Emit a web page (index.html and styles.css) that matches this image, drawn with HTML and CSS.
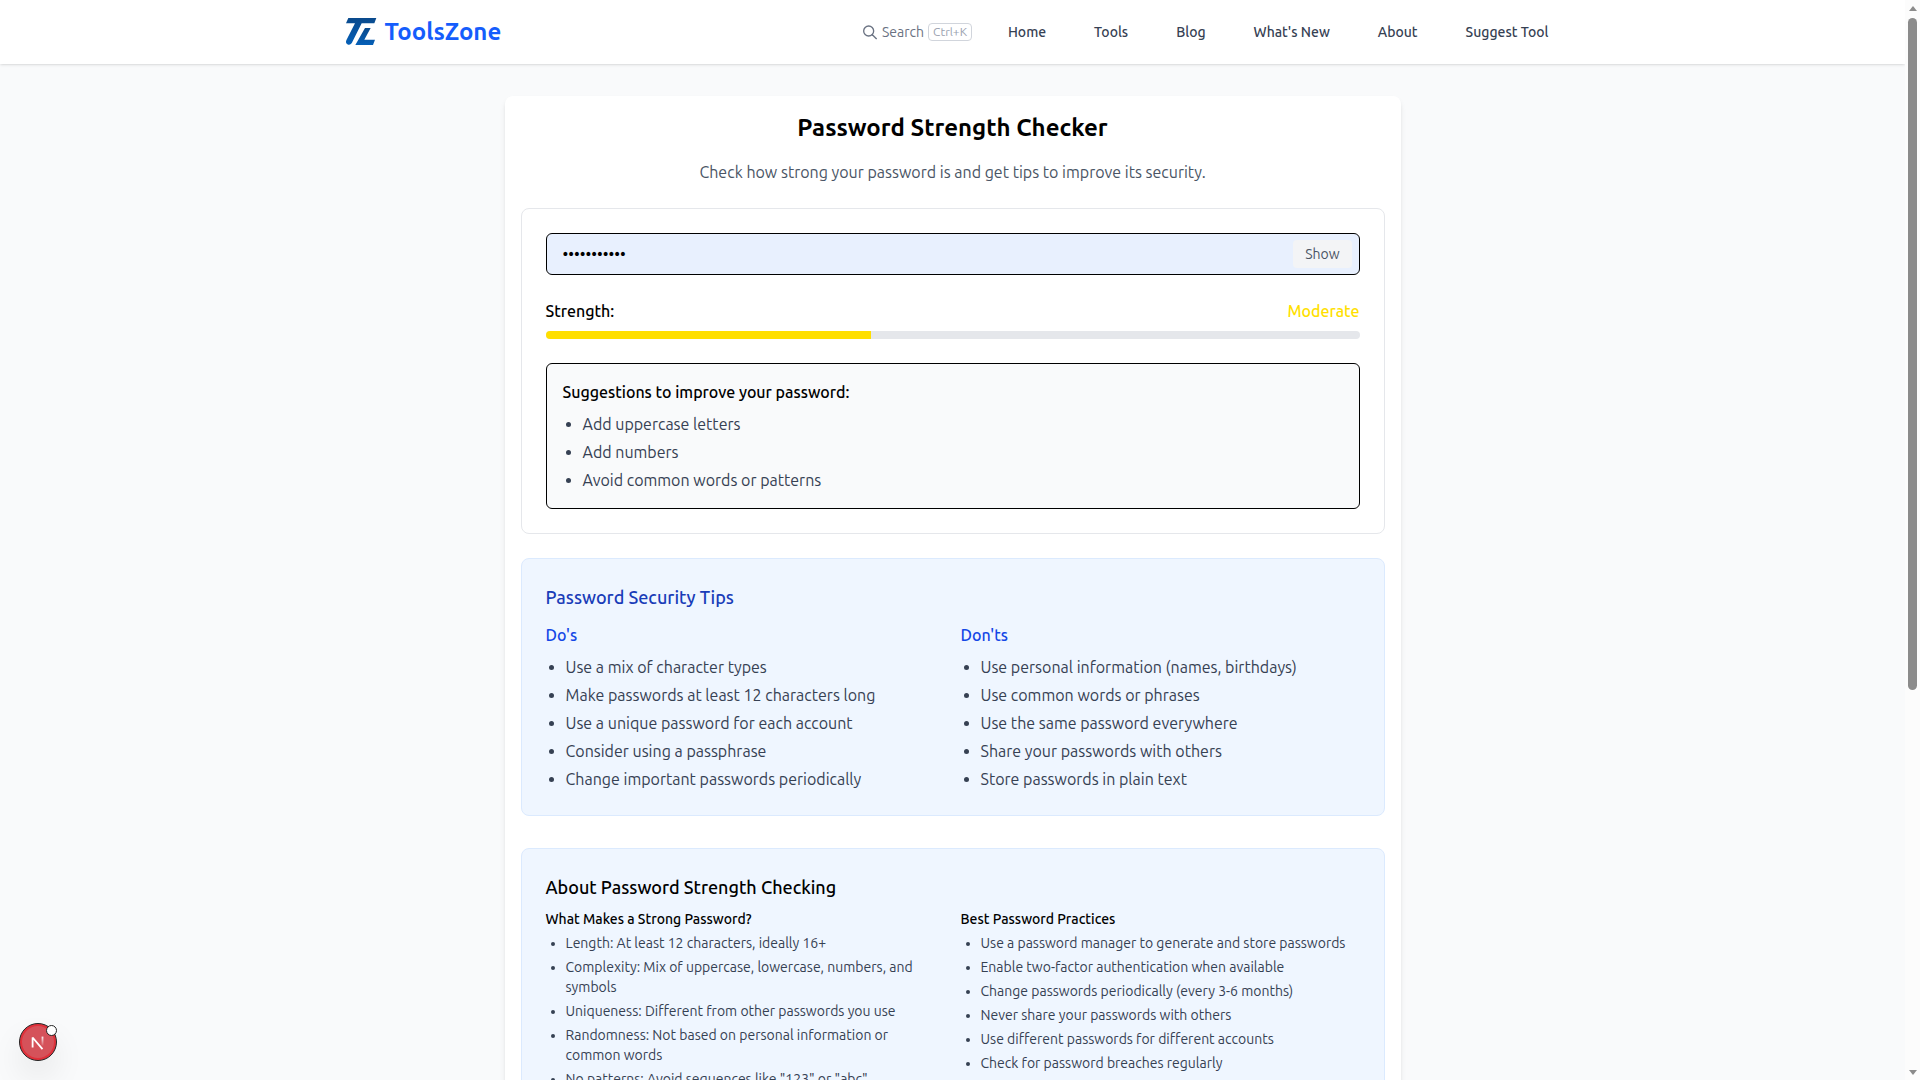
FILE: index.html
```html
<!DOCTYPE html>
<html lang="en">

<head>
    <meta charset="UTF-8">
    <meta name="viewport" content="width=device-width, initial-scale=1.0">
    <title>Password Strength Checker - ToolsZone</title>
    <link rel="stylesheet" href="styles.css">
</head>

<body>
    <header class="site-header">
        <div class="header-inner">
            <a href="#" class="brand">
                <svg class="brand-logo" viewBox="0 0 96 96" aria-hidden="true">
                    <defs>
                        <linearGradient id="logo-fill" x1="0" y1="0" x2="0" y2="1">
                            <stop offset="0" stop-color="#0a4a8c" />
                            <stop offset="1" stop-color="#0560b8" />
                        </linearGradient>
                    </defs>
                    <path fill="url(#logo-fill)" d="M10 6H94L88 22H50L23 76Q19 87 10 86Q0 83 4 73L30 22H3Z" />
                    <path fill="url(#logo-fill)" d="M60 36H77L58 71H90L84 87H31Z" />
                </svg>
                <span class="brand-name">ToolsZone</span>
            </a>
            <nav class="main-nav">
                <button type="button" class="search-btn">
                    <svg class="search-icon" viewBox="0 0 24 24" fill="none" stroke="currentColor" stroke-width="2" stroke-linecap="round" stroke-linejoin="round" aria-hidden="true">
                        <circle cx="10" cy="10.5" r="7.5" />
                        <path d="M15.5 16l6 6" />
                    </svg>
                    <span>Search</span>
                    <kbd>Ctrl+K</kbd>
                </button>
                <a href="#">Home</a>
                <a href="#">Tools</a>
                <a href="#">Blog</a>
                <a href="#">What's New</a>
                <a href="#">About</a>
                <a href="#">Suggest Tool</a>
            </nav>
        </div>
    </header>

    <main class="card">
        <h1>Password Strength Checker</h1>
        <p class="subtitle">Check how strong your password is and get tips to improve its security.</p>

        <section class="panel checker">
            <div class="password-field">
                <input type="password" id="password-input" aria-label="Password" value="sunshine-tr">
                <button type="button" id="toggle-btn">Show</button>
            </div>

            <div class="strength">
                <div class="strength-row">
                    <span>Strength:</span>
                    <span class="strength-label">Moderate</span>
                </div>
                <div class="strength-bar">
                    <div class="strength-fill" style="width: 40%"></div>
                </div>
            </div>

            <div class="suggestions">
                <h3>Suggestions to improve your password:</h3>
                <ul>
                    <li>Add uppercase letters</li>
                    <li>Add numbers</li>
                    <li>Avoid common words or patterns</li>
                </ul>
            </div>
        </section>

        <section class="panel tips">
            <h2>Password Security Tips</h2>
            <div class="columns">
                <div>
                    <h3>Do's</h3>
                    <ul>
                        <li>Use a mix of character types</li>
                        <li>Make passwords at least 12 characters long</li>
                        <li>Use a unique password for each account</li>
                        <li>Consider using a passphrase</li>
                        <li>Change important passwords periodically</li>
                    </ul>
                </div>
                <div>
                    <h3>Don'ts</h3>
                    <ul>
                        <li>Use personal information (names, birthdays)</li>
                        <li>Use common words or phrases</li>
                        <li>Use the same password everywhere</li>
                        <li>Share your passwords with others</li>
                        <li>Store passwords in plain text</li>
                    </ul>
                </div>
            </div>
        </section>

        <section class="panel about">
            <h2>About Password Strength Checking</h2>
            <div class="columns">
                <div>
                    <h3>What Makes a Strong Password?</h3>
                    <ul>
                        <li>Length: At least 12 characters, ideally 16+</li>
                        <li>Complexity: Mix of uppercase, lowercase, numbers, and symbols</li>
                        <li>Uniqueness: Different from other passwords you use</li>
                        <li>Randomness: Not based on personal information or common words</li>
                        <li>No patterns: Avoid sequences like "123" or "abc"</li>
                    </ul>
                </div>
                <div>
                    <h3>Best Password Practices</h3>
                    <ul>
                        <li>Use a password manager to generate and store passwords</li>
                        <li>Enable two-factor authentication when available</li>
                        <li>Change passwords periodically (every 3-6 months)</li>
                        <li>Never share your passwords with others</li>
                        <li>Use different passwords for different accounts</li>
                        <li>Check for password breaches regularly</li>
                    </ul>
                </div>
            </div>
        </section>
    </main>

    <button type="button" class="dev-badge" aria-label="Open dev tools">
        <svg viewBox="0 0 40 40" fill="none" aria-hidden="true">
            <defs>
                <linearGradient id="n-fade" x1="0" y1="13" x2="0" y2="25" gradientUnits="userSpaceOnUse">
                    <stop offset="0" stop-color="#fff" />
                    <stop offset="1" stop-color="#fff" stop-opacity="0" />
                </linearGradient>
            </defs>
            <path d="M14 26V15L25 28" stroke="#fff" stroke-width="2" stroke-linejoin="bevel" />
            <path d="M25 14V24" stroke="url(#n-fade)" stroke-width="2" />
        </svg>
        <span class="dev-dot"></span>
    </button>

    <div class="scrollbar" aria-hidden="true">
        <span class="arrow-up"></span>
        <div class="track">
            <div class="thumb"></div>
        </div>
        <span class="arrow-down"></span>
    </div>

    <script>
        var input = document.getElementById('password-input');
        var toggle = document.getElementById('toggle-btn');

        toggle.addEventListener('click', function () {
            var hidden = input.type === 'password';
            input.type = hidden ? 'text' : 'password';
            toggle.textContent = hidden ? 'Hide' : 'Show';
        });
    </script>
</body>

</html>
```
FILE: styles.css
```css
* {
    box-sizing: border-box;
}

body {
    margin: 0;
    padding-right: 15px;
    height: 100vh;
    overflow: hidden;
    font-family: Ubuntu, Roboto, sans-serif;
    font-size: 16px;
    line-height: 24px;
    color: #000;
    background-color: #f9fafb;
}

h1,
h2,
h3,
p,
ul {
    margin: 0;
    padding: 0;
}

h2,
h3 {
    font-weight: 500;
}

button,
input {
    font-family: inherit;
}

button {
    cursor: pointer;
}

/* Header */

.site-header {
    background-color: #fff;
    box-shadow: 0 1px 3px rgba(0, 0, 0, 0.1), 0 1px 2px -1px rgba(0, 0, 0, 0.1);
}

.header-inner {
    display: flex;
    align-items: center;
    justify-content: space-between;
    max-width: 1280px;
    height: 64px;
    margin: 0 auto;
    padding: 0 32px;
}

.brand {
    display: flex;
    align-items: center;
    gap: 8px;
    color: #155dfc;
    text-decoration: none;
}

.brand-logo {
    width: 32px;
    height: 32px;
}

.brand-name {
    font-size: 24px;
    font-weight: 700;
    line-height: 32px;
}

.main-nav {
    display: flex;
    align-items: center;
    gap: 24px;
}

.main-nav a {
    padding: 8px 12px;
    font-size: 14px;
    font-weight: 500;
    line-height: 20px;
    color: #364153;
    text-decoration: none;
}

.search-btn {
    display: flex;
    align-items: center;
    gap: 4px;
    padding: 0;
    border: none;
    background: none;
    font-size: 14px;
    line-height: 20px;
    color: #6a7282;
}

.search-icon {
    width: 16px;
    height: 16px;
}

.search-btn kbd {
    padding: 0 4px;
    border: 1px solid #d1d5dc;
    border-radius: 4px;
    font-family: inherit;
    font-size: 12px;
    line-height: 16px;
    color: #99a1af;
}

/* Main card */

.card {
    max-width: 896px;
    margin: 32px auto;
    padding: 16px;
    background-color: #fff;
    border-radius: 8px;
    box-shadow: 0 4px 6px -1px rgba(0, 0, 0, 0.1), 0 2px 4px -2px rgba(0, 0, 0, 0.1);
}

h1 {
    margin-bottom: 16px;
    font-size: 24px;
    font-weight: 600;
    line-height: 32px;
    text-align: center;
}

.subtitle {
    margin-bottom: 24px;
    color: #4a5565;
    text-align: center;
}

.panel {
    padding: 24px;
    border: 1px solid #e5e7eb;
    border-radius: 8px;
}

ul {
    padding-left: 20px;
    color: #364153;
}

li + li {
    margin-top: 4px;
}

.columns {
    display: grid;
    grid-template-columns: 1fr 1fr;
    gap: 16px;
}

/* Checker */

.checker {
    display: flex;
    flex-direction: column;
    gap: 24px;
}

.password-field {
    position: relative;
}

#password-input {
    display: block;
    width: 100%;
    height: 42px;
    padding: 8px 16px;
    border: 1px solid #000;
    border-radius: 6px;
    background-color: #e8f0fe;
    font-size: 16px;
    color: #000;
}

#toggle-btn {
    position: absolute;
    top: 7px;
    right: 8px;
    padding: 4px 12px;
    border: none;
    border-radius: 4px;
    background-color: #f3f4f6;
    font-size: 14px;
    line-height: 20px;
    color: #4a5565;
}

.strength-row {
    display: flex;
    justify-content: space-between;
    margin-bottom: 8px;
    font-weight: 500;
}

.strength-label {
    color: #ffdf00;
}

.strength-bar {
    height: 8px;
    border-radius: 4px;
    background-color: #e5e7eb;
    overflow: hidden;
}

.strength-fill {
    height: 100%;
    background-color: #ffdf00;
}

.suggestions {
    padding: 16px;
    border: 1px solid #000;
    border-radius: 6px;
    background-color: #f9fafb;
}

.suggestions h3 {
    margin-bottom: 8px;
    font-size: 16px;
}

/* Tips and about */

.tips,
.about {
    border-color: #dbeafe;
    background-color: #eff6ff;
}

.tips {
    margin-top: 24px;
}

.tips h2,
.about h2 {
    font-size: 18px;
    line-height: 28px;
}

.tips h2 {
    margin-bottom: 12px;
    color: #193cb8;
}

.tips h3 {
    margin-bottom: 8px;
    font-size: 16px;
    color: #1447e6;
}

.about {
    margin-top: 32px;
    font-size: 14px;
    line-height: 20px;
}

.about h2 {
    margin-bottom: 8px;
}

.about h3 {
    margin-bottom: 4px;
    font-size: 14px;
}

/* Floating badge */

.dev-badge {
    position: fixed;
    left: 19px;
    bottom: 19px;
    width: 38px;
    height: 38px;
    padding: 0;
    border: 1px solid #222;
    border-radius: 50%;
    background-color: #d5525a;
    box-shadow: inset 0 0 0 2px #e0303a, 0 16px 32px rgba(0, 0, 0, 0.08);
}

.dev-badge svg {
    display: block;
    width: 100%;
    height: 100%;
}

.dev-dot {
    position: absolute;
    top: 1px;
    right: -1px;
    width: 11px;
    height: 11px;
    border: 1px solid #222;
    border-radius: 50%;
    background-color: #fff;
}

/* Scrollbar */

.scrollbar {
    position: fixed;
    top: 0;
    right: 0;
    bottom: 0;
    display: flex;
    flex-direction: column;
    align-items: center;
    gap: 7px;
    width: 15px;
    padding: 6px 0 5px;
    background-color: #fcfcfc;
}

.arrow-up,
.arrow-down {
    border: 4px solid transparent;
}

.arrow-up {
    border-top: none;
    border-bottom: 5px solid #8b8b8b;
}

.arrow-down {
    border-bottom: none;
    border-top: 5px solid #8b8b8b;
}

.track {
    flex: 1;
    width: 9px;
}

.thumb {
    height: 64.3%;
    border-radius: 5px;
    background-color: #8b8b8b;
}
```
